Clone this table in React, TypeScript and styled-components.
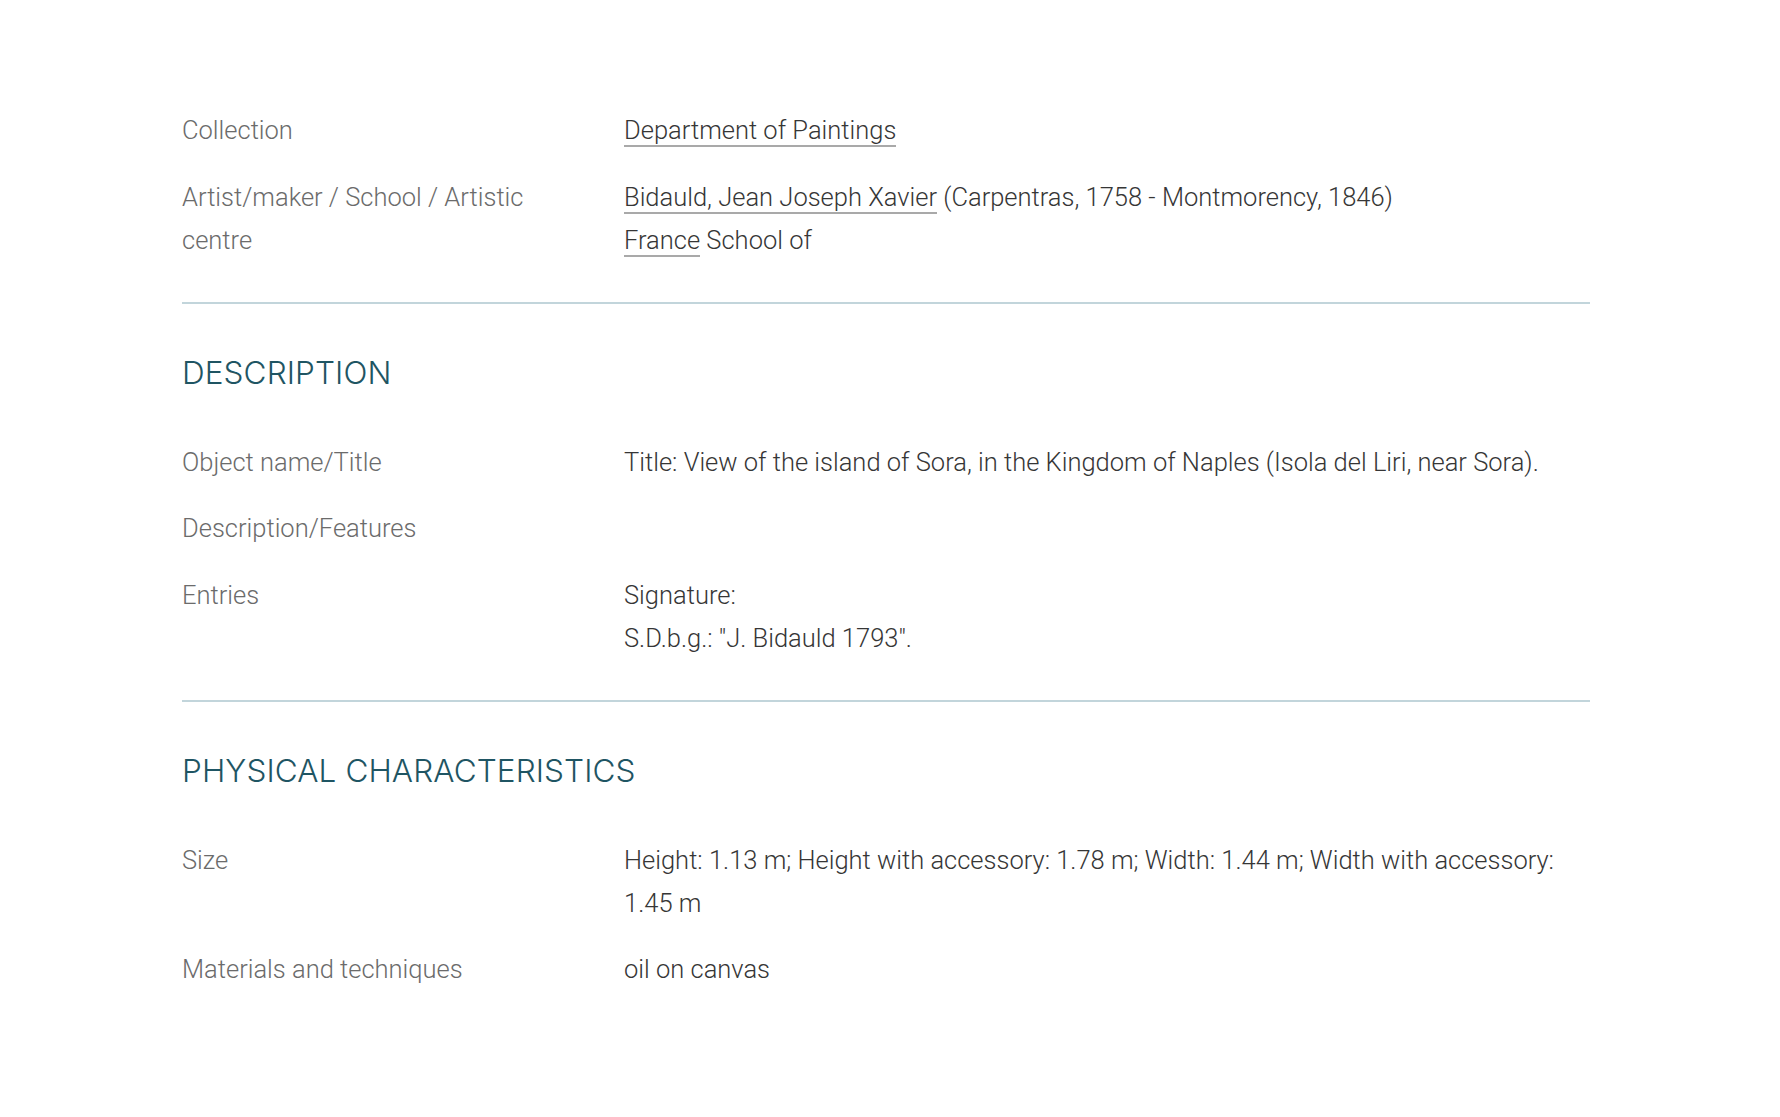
import React from 'react'
import styled, { createGlobalStyle } from 'styled-components'

const GlobalStyle = createGlobalStyle`
  html, body {
    margin: 0;
    padding: 0;
    background: #ffffff;
  }
  body {
    font-family: Roboto, "Liberation Sans", Arial, sans-serif;
  }
`

const Page = styled.main`
  width: 1408px;
  margin-left: 182px;
  padding: 109px 0 120px;
`

const Section = styled.section`
  display: flex;
  flex-direction: column;
`

const Heading = styled.h2`
  margin: 0 0 50px;
  font-family: Inter, "Open Sans", sans-serif;
  font-weight: 300;
  font-size: 31.5px;
  line-height: 37px;
  letter-spacing: 0.1px;
  color: #1f5563;
`

const Rows = styled.dl`
  margin: 0;
  display: flex;
  flex-direction: column;
  gap: 23.5px;
`

const Row = styled.div`
  display: grid;
  grid-template-columns: 380px 1fr;
  column-gap: 62px;
  font-size: 25.5px;
  line-height: 43px;
  font-weight: 300;
`

const Label = styled.dt`
  margin: 0;
  color: #6b6b6b;
`

const Value = styled.dd`
  margin: 0;
  color: #363636;
`

const Line = styled.div``

const Link = styled.a`
  color: inherit;
  text-decoration: none;
  border-bottom: 2px solid #a9a9a9;
`

const Divider = styled.hr`
  margin: 40px 0 50px;
  border: none;
  height: 2px;
  background: #c2d5db;
`

type Field = { label: string; lines: React.ReactNode[] }

const identity: Field[] = [
  { label: 'Collection', lines: [<Link href="#">Department of Paintings</Link>] },
  {
    label: 'Artist/maker / School / Artistic centre',
    lines: [
      <>
        <Link href="#">Bidauld, Jean Joseph Xavier</Link> (Carpentras, 1758 - Montmorency, 1846)
      </>,
      <>
        <Link href="#">France</Link> School of
      </>,
    ],
  },
]

const description: Field[] = [
  {
    label: 'Object name/Title',
    lines: ['Title: View of the island of Sora, in the Kingdom of Naples (Isola del Liri, near Sora).'],
  },
  { label: 'Description/Features', lines: [] },
  { label: 'Entries', lines: ['Signature:', 'S.D.b.g.: "J. Bidauld 1793".'] },
]

const physical: Field[] = [
  {
    label: 'Size',
    lines: ['Height: 1.13 m; Height with accessory: 1.78 m; Width: 1.44 m; Width with accessory: 1.45 m'],
  },
  { label: 'Materials and techniques', lines: ['oil on canvas'] },
]

const FieldList = ({ fields }: { fields: Field[] }) => (
  <Rows>
    {fields.map((f) => (
      <Row key={f.label}>
        <Label>{f.label}</Label>
        <Value>
          {f.lines.map((l, i) => (
            <Line key={i}>{l}</Line>
          ))}
        </Value>
      </Row>
    ))}
  </Rows>
)

export default function App() {
  return (
    <>
      <GlobalStyle />
      <Page>
        <Section>
          <FieldList fields={identity} />
        </Section>
        <Divider />
        <Section>
          <Heading>DESCRIPTION</Heading>
          <FieldList fields={description} />
        </Section>
        <Divider />
        <Section>
          <Heading>PHYSICAL CHARACTERISTICS</Heading>
          <FieldList fields={physical} />
        </Section>
      </Page>
    </>
  )
}
